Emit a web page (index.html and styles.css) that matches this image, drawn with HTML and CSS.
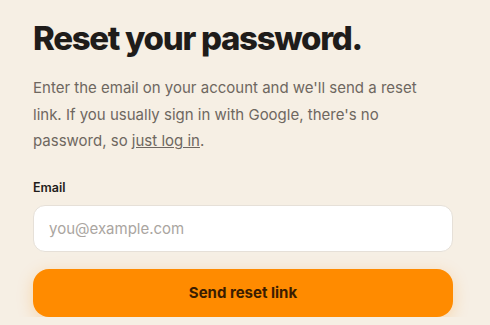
FILE: index.html
```html
<!DOCTYPE html>
<html lang="en">
<head>
  <meta charset="UTF-8" />
  <title>Reset your password</title>
  <link rel="stylesheet" href="styles.css">
</head>
<body>

  <div class="reset">
    <h1>Reset your password.</h1>
    <p class="intro">
      Enter the email on your account and we'll send a reset link. If you usually sign in with Google, there's no password, so <a href="#">just log in</a>.
    </p>

    <form class="reset-form">
      <label for="email">Email</label>
      <input type="email" id="email" placeholder="you@example.com">
      <button type="submit">Send reset link</button>
    </form>
  </div>

</body>
</html>
```

FILE: styles.css
```css
body {
  background-color: #f6efe4;
  color: #1f1c1a;
  font-family: Inter, "Noto Sans", sans-serif;
  margin: 0;
  padding: 14px 37px 0 33px;
}
h1 {
  font-size: 33px;
  font-weight: 800;
  letter-spacing: -1.3px;
  margin: 0 0 13px;
  line-height: 48px;
}
.intro {
  color: #6e6760;
  font-size: 15px;
  line-height: 26.5px;
  margin: 0 0 25px;
  max-width: 400px;
}
.intro a {
  color: #6e6760;
}
.reset-form {
  display: flex;
  flex-direction: column;
}
.reset-form label {
  font-size: 12.5px;
  font-weight: 600;
  margin-bottom: 10px;
}
.reset-form input {
  height: 47px;
  box-sizing: border-box;
  border: 1px solid #e6e0d8;
  border-radius: 12px;
  background: #fff;
  padding: 0 15px;
  font-family: inherit;
  font-size: 15px;
  color: #1f1c1a;
  margin-bottom: 17px;
}
.reset-form input::placeholder {
  color: #aaa59f;
}
.reset-form button {
  height: 48px;
  border: none;
  border-radius: 16px;
  background-color: #ff8b00;
  color: #3b1d00;
  font-family: inherit;
  font-size: 15px;
  font-weight: 700;
  box-shadow: 0 4px 16px rgba(255, 140, 0, 0.25);
}
```
